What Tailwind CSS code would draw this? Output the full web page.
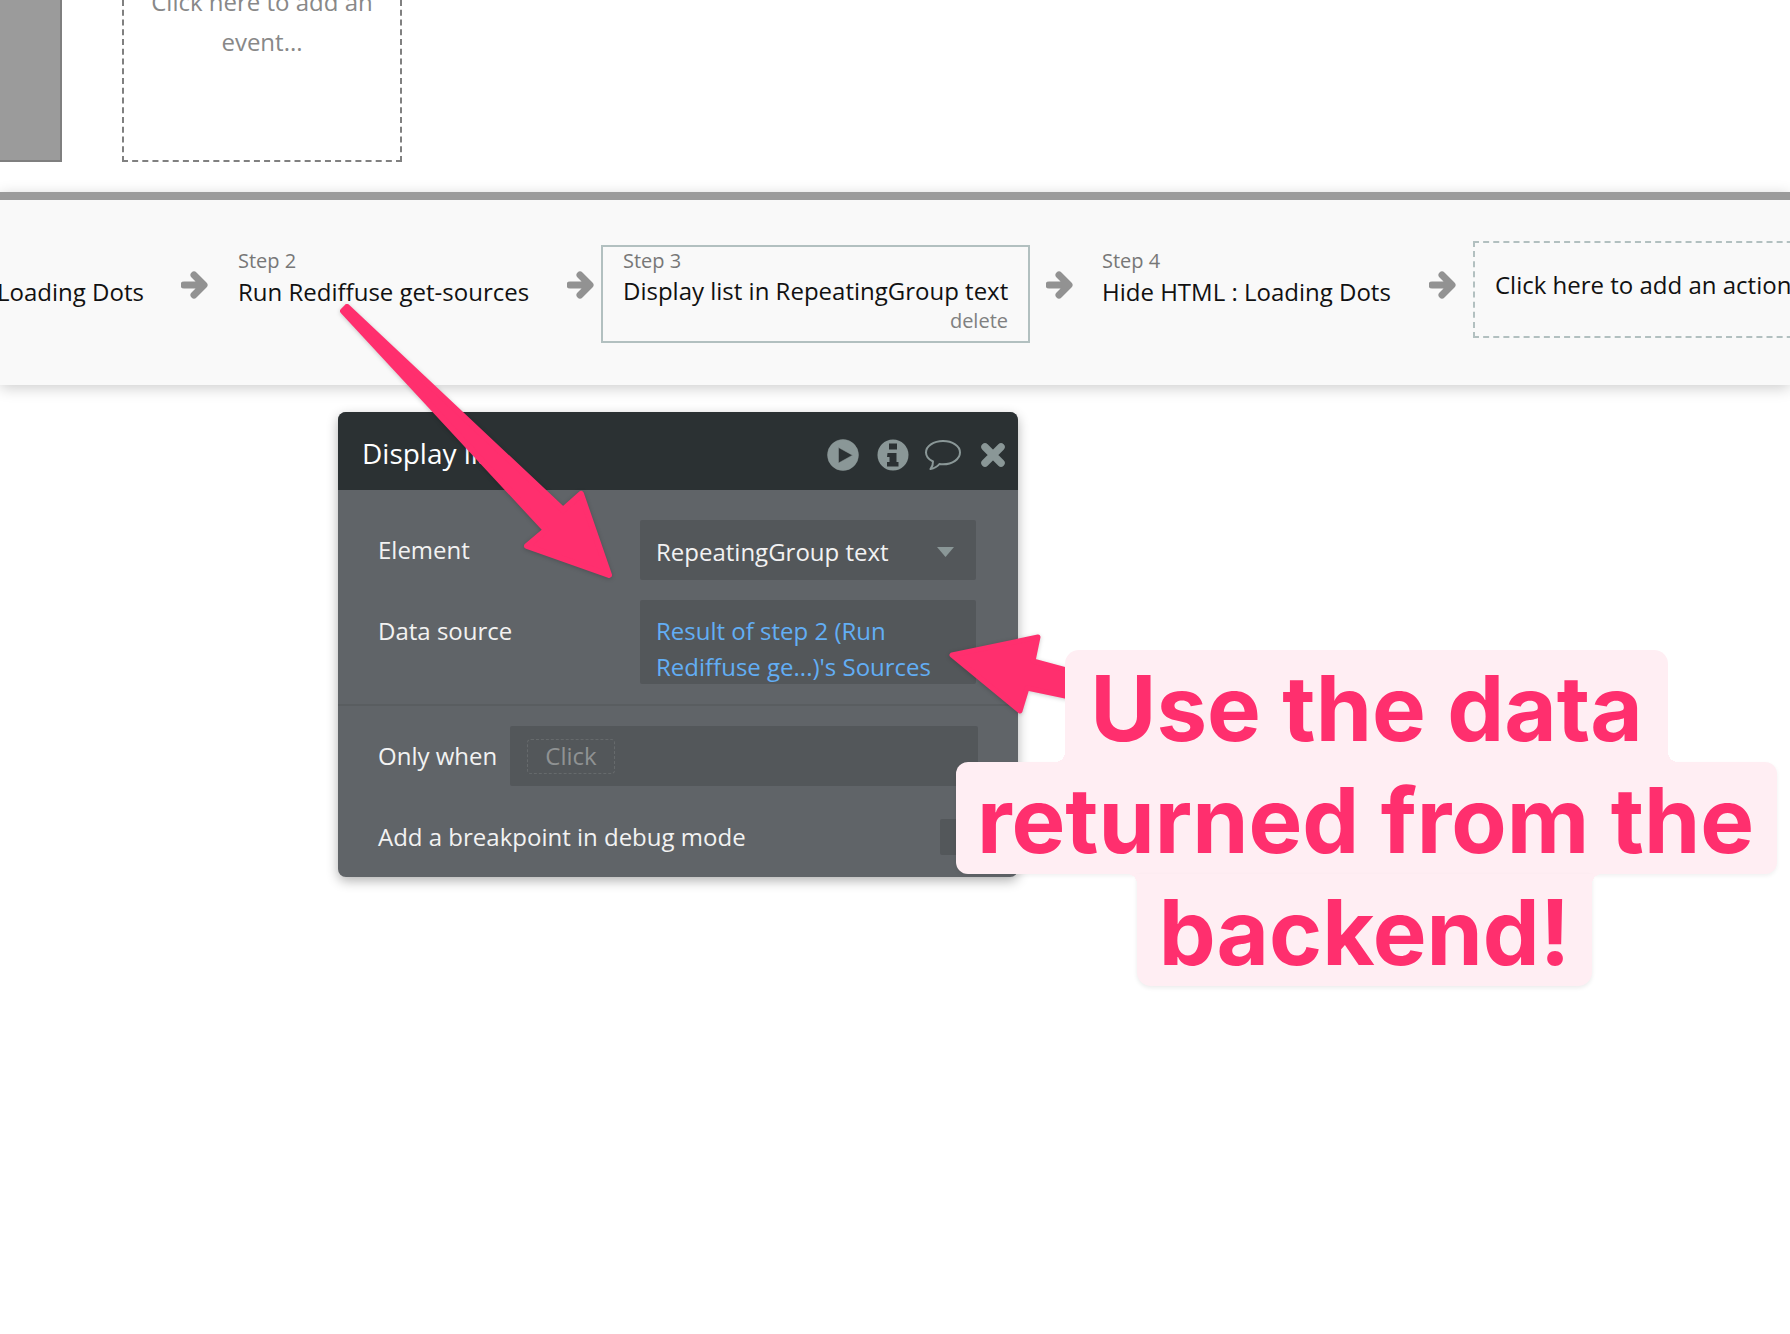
<!DOCTYPE html>
<html lang="en">
<head>
  <meta charset="UTF-8">
  <title>Workflow editor</title>
  <script src="https://cdn.jsdelivr.net/npm/@tailwindcss/browser@4"></script>
</head>
<body class="bg-white">

<div class="relative w-[1790px] h-[1334px] overflow-hidden bg-white font-['Open_Sans',sans-serif]">

  <!-- event row -->
  <div class="flex h-[192px] items-start">
    <div class="w-[62px] h-[162px] bg-[#9b9b9b] border-r-2 border-b-2 border-[#7f7f7f]"></div>
    <div class="ml-[60px] w-[280px] h-[162px] border-2 border-t-0 border-dashed border-[#808080] overflow-hidden">
      <p class="-mt-[18px] text-center text-[24px] leading-[40px] text-[#888888]">Click here to add an<br>event...</p>
    </div>
  </div>

  <!-- actions strip -->
  <div class="relative flex h-[193px] items-start border-t-8 border-[#9b9b9b] bg-[#f9f9f9] shadow-[0_3px_14px_rgba(0,0,0,0.2)]">
    <div class="mt-[48px] w-[184px] shrink-0 -ml-[3px]">
      <p class="text-[20px] leading-[26px] text-[#777777] invisible">Step 1</p>
      <p class="mt-[3px] text-[24px] leading-[30px] text-[#111111]">Loading Dots</p>
    </div>
    <svg class="mt-[71px] w-[27px] h-[28px] shrink-0" viewBox="0 0 27 28"><path d="M3 14H22M13 4l10 10-10 10" fill="none" stroke="#929292" stroke-width="7" stroke-linecap="round" stroke-linejoin="round"/></svg>
    <div class="mt-[48px] ml-[30px] w-[329px] shrink-0">
      <p class="text-[20px] leading-[26px] text-[#777777]">Step 2</p>
      <p class="mt-[3px] text-[24px] leading-[30px] text-[#111111]">Run Rediffuse get-sources</p>
    </div>
    <svg class="mt-[71px] w-[27px] h-[28px] shrink-0" viewBox="0 0 27 28"><path d="M3 14H22M13 4l10 10-10 10" fill="none" stroke="#929292" stroke-width="7" stroke-linecap="round" stroke-linejoin="round"/></svg>
    <div class="mt-[45px] ml-[7px] w-[429px] h-[98px] shrink-0 border-2 border-[#b2c0c0] pl-[20px] pr-[20px]">
      <p class="text-[20px] leading-[26px] text-[#777777] mt-[1px]">Step 3</p>
      <p class="mt-[2px] text-[24px] leading-[30px] text-[#111111] whitespace-nowrap">Display list in RepeatingGroup text</p>
      <p class="text-right text-[20px] leading-[26px] text-[#808080] mt-[2px]">delete</p>
    </div>
    <svg class="mt-[71px] ml-[16px] w-[27px] h-[28px] shrink-0" viewBox="0 0 27 28"><path d="M3 14H22M13 4l10 10-10 10" fill="none" stroke="#929292" stroke-width="7" stroke-linecap="round" stroke-linejoin="round"/></svg>
    <div class="mt-[48px] ml-[29px] w-[327px] shrink-0">
      <p class="text-[20px] leading-[26px] text-[#777777]">Step 4</p>
      <p class="mt-[3px] text-[24px] leading-[30px] text-[#111111]">Hide HTML : Loading Dots</p>
    </div>
    <svg class="mt-[71px] w-[27px] h-[28px] shrink-0" viewBox="0 0 27 28"><path d="M3 14H22M13 4l10 10-10 10" fill="none" stroke="#929292" stroke-width="7" stroke-linecap="round" stroke-linejoin="round"/></svg>
    <div class="mt-[41px] ml-[17px] w-[340px] h-[97px] shrink-0 border-2 border-dashed border-[#b2c0c0] pl-[20px] pt-[27px]">
      <p class="text-[24px] leading-[30px] text-[#111111] whitespace-nowrap">Click here to add an action...</p>
    </div>
  </div>

  <!-- floating property editor -->
  <div class="absolute left-[338px] top-[412px] w-[680px] h-[465px] rounded-lg bg-[#606468] shadow-[0_4px_12px_rgba(0,0,0,0.3)] overflow-hidden">
    <div class="flex h-[78px] items-center justify-between bg-[#2b3133] pl-[24px] pr-[12px]">
      <p class="text-[28px] mt-[4px] text-white">Display list</p>
      <div class="flex items-center mt-[8px]">
        <svg class="w-[32px] h-[32px]" viewBox="0 0 32 32"><path fill="#8a9797" fill-rule="evenodd" d="M16 .5a15.5 15.5 0 1 1 0 31 15.5 15.5 0 0 1 0-31ZM11.5 8.5v15.500l14-7.800Z" stroke="#8a9797" stroke-width=".5"/></svg>
        <svg class="ml-[18px] w-[32px] h-[32px]" viewBox="0 0 32 32"><circle cx="16" cy="16" r="15.5" fill="#8a9797"/><path fill="#2b3133" d="M12 4.500h8v6h-8ZM10.500 14h9v9h2v4.500h-11.500v-4.500h2.500v-5h-2.500Z"/></svg>
        <svg class="ml-[15px] w-[38px] h-[33px]" viewBox="0 0 38 33"><path d="M19 2C9.500 2 2 7.300 2 13.500c0 3.800 2.800 7 7 9 .2 2.500-.6 5-2.600 7.500 3.800-.6 7-2.500 9-5 1 .2 2.300.3 3.600.3 9.500 0 17-5.300 17-11.800S28.500 2 19 2Z" fill="none" stroke="#8a9797" stroke-width="2" stroke-linejoin="round"/></svg>
        <svg class="ml-[18px] w-[26px] h-[26px]" viewBox="0 0 26 26"><path d="M5 5l16 16M21 5L5 21" fill="none" stroke="#8a9797" stroke-width="7.500" stroke-linecap="round"/></svg>
      </div>
    </div>

    <div class="flex mt-[30px] pl-[40px]">
      <p class="w-[262px] text-[24px] leading-[60px] text-[#f2f2f2]">Element</p>
      <div class="flex w-[336px] h-[60px] items-center justify-between rounded-[2px] bg-[#53575a] pl-[16px] pr-[22px] pt-[4px]">
        <span class="text-[24px] text-[#f2f2f2]">RepeatingGroup text</span>
        <svg class="w-[17px] h-[10px]" viewBox="0 0 17 10"><path d="M0 0h17l-8.500 10Z" fill="#8a9797"/></svg>
      </div>
    </div>

    <div class="flex mt-[20px] pl-[40px]">
      <p class="w-[262px] text-[24px] leading-[30px] mt-[16px] text-[#f2f2f2]">Data source</p>
      <div class="w-[336px] h-[84px] rounded-[2px] bg-[#53575a] pl-[16px] pt-[13px] text-[24px] leading-[36px] text-[#62aef5]">Result of step 2 (Run<br>Rediffuse ge...)'s Sources</div>
    </div>

    <div class="mt-[20px] border-t-2 border-[#595d60] flex items-center pl-[40px] pt-[20px]">
      <p class="w-[132px] text-[24px] text-[#f2f2f2]">Only when</p>
      <div class="flex w-[468px] h-[60px] items-center rounded-[2px] bg-[#53575a] pl-[17px]">
        <span class="flex w-[88px] h-[35px] items-center justify-center rounded-[4px] border border-dashed border-[#666a6c] text-[24px] text-[#8f9293]">Click</span>
      </div>
    </div>

    <div class="flex items-center mt-[33px] pl-[40px] pr-[42px] justify-between">
      <p class="text-[24px] leading-[36px] text-[#f2f2f2]">Add a breakpoint in debug mode</p>
      <div class="w-[36px] h-[36px] rounded-[2px] bg-[#53575a]"></div>
    </div>
  </div>

  <!-- annotation arrows -->
  <svg class="absolute inset-0 w-[1790px] h-[1334px] drop-shadow-[0_1px_2px_rgba(0,0,0,0.2)]" viewBox="0 0 1790 1334">
    <path d="M347 307 563 510 581 494 609 575 527 546 546 530 343 311Z" fill="#ff2f6e" stroke="#ff2f6e" stroke-width="6" stroke-linejoin="round"/>
    <path d="M952 655 1038 637 1033 661 1070 671 1070 697 1027 688 1020 711Z" fill="#ff2f6e" stroke="#ff2f6e" stroke-width="5" stroke-linejoin="round"/>
  </svg>

  <!-- callout -->
  <div class="absolute left-[955px] top-[650px] w-[823px] flex flex-col items-center font-['Inter',sans-serif] font-bold text-[90.4px] leading-[116px] text-[#ff2f6e]">
    <div class="relative h-[112px] rounded-t-[14px] bg-[#ffeef3] px-[25px] whitespace-nowrap">Use the data<span class="absolute right-full bottom-0 w-[10px] h-[10px] bg-[radial-gradient(circle_at_0_0,transparent_10px,#ffeef3_10px)]"></span><span class="absolute left-full bottom-0 w-[10px] h-[10px] bg-[radial-gradient(circle_at_100%_0,transparent_10px,#ffeef3_10px)]"></span></div>
    <div class="h-[112px] rounded-[12px] bg-[#ffeef3] pl-[21px] pr-[23px] whitespace-nowrap shadow-[0_2px_4px_rgba(0,0,0,0.06)]">returned from the</div>
    <div class="relative mr-[4px] h-[112px] rounded-b-[14px] bg-[#ffeef3] px-[22px] whitespace-nowrap shadow-[0_2px_4px_rgba(0,0,0,0.08)]">backend!<span class="absolute right-full top-0 w-[10px] h-[10px] bg-[radial-gradient(circle_at_0_100%,transparent_10px,#ffeef3_10px)]"></span><span class="absolute left-full top-0 w-[10px] h-[10px] bg-[radial-gradient(circle_at_100%_100%,transparent_10px,#ffeef3_10px)]"></span></div>
  </div>
</div>

</body>
</html>
